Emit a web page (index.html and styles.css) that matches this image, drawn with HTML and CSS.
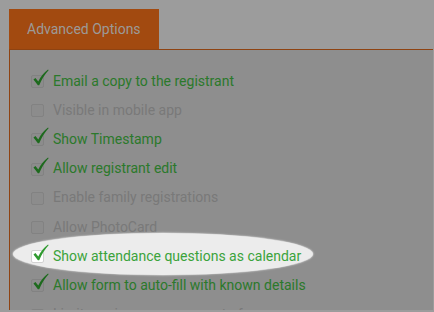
FILE: index.html
```html
<!DOCTYPE html>
<html>
<head>
<meta charset="utf-8">
<link rel="stylesheet" href="styles.css">
</head>
<body>
<div class="tabs"><div class="tab">Advanced Options</div></div>
<div class="panel">
  <div class="row on"><span class="box"><svg class="tick" viewBox="0 0 17 18"><path d="M0.5 11 L2.6 9.6 L5.6 13.2 Q9.5 5.5 16 0.6 L16.6 1.3 Q11 7 6.6 17.2 L5.2 17.2 Z"/></svg></span><span class="label">Email a copy to the registrant</span></div>
  <div class="row off"><span class="box"></span><span class="label">Visible in mobile app</span></div>
  <div class="row on"><span class="box"><svg class="tick" viewBox="0 0 17 18"><path d="M0.5 11 L2.6 9.6 L5.6 13.2 Q9.5 5.5 16 0.6 L16.6 1.3 Q11 7 6.6 17.2 L5.2 17.2 Z"/></svg></span><span class="label">Show Timestamp</span></div>
  <div class="row on"><span class="box"><svg class="tick" viewBox="0 0 17 18"><path d="M0.5 11 L2.6 9.6 L5.6 13.2 Q9.5 5.5 16 0.6 L16.6 1.3 Q11 7 6.6 17.2 L5.2 17.2 Z"/></svg></span><span class="label">Allow registrant edit</span></div>
  <div class="row off"><span class="box"></span><span class="label">Enable family registrations</span></div>
  <div class="row off"><span class="box"></span><span class="label">Allow PhotoCard</span></div>
  <div class="row on spot"><span class="box"><svg class="tick" viewBox="0 0 17 18"><path d="M0.5 11 L2.6 9.6 L5.6 13.2 Q9.5 5.5 16 0.6 L16.6 1.3 Q11 7 6.6 17.2 L5.2 17.2 Z"/></svg></span><span class="label">Show attendance questions as calendar</span></div>
  <div class="row on"><span class="box"><svg class="tick" viewBox="0 0 17 18"><path d="M0.5 11 L2.6 9.6 L5.6 13.2 Q9.5 5.5 16 0.6 L16.6 1.3 Q11 7 6.6 17.2 L5.2 17.2 Z"/></svg></span><span class="label">Allow form to auto-fill with known details</span></div>
  <div class="row off"><span class="box"></span><span class="label">Limit maximum responses to form</span></div>
</div>
</body>
</html>
```
FILE: styles.css
```css
html, body {
  margin: 0;
  padding: 0;
  background: #9c9c9c;
  font-family: Roboto, "Liberation Sans", sans-serif;
  font-size: 14px;
}
body {
  padding: 9px 1px 0 9px;
  height: 312px;
  box-sizing: border-box;
  overflow: hidden;
}
.tabs {
  display: flex;
  height: 40px;
}
.tab {
  background: #a24a10;
  color: #9c9a98;
  width: 150px;
  box-sizing: border-box;
  padding-left: 18px;
  line-height: 40px;
}
.panel {
  background: #8e8e8e;
  border-top: 1px solid #8e4312;
  border-left: 1px solid #8e4312;
  height: 261px;
  box-sizing: border-box;
  padding-top: 16px;
  overflow: hidden;
  display: flex;
  flex-direction: column;
}
.row {
  position: relative;
  z-index: 0;
  display: flex;
  align-items: center;
  gap: 9px;
  height: 29.2px;
  flex: none;
  padding-left: 21px;
  white-space: nowrap;
}
.box {
  position: relative;
  width: 11px;
  height: 11px;
  border: 1px solid #828282;
  border-radius: 2px;
  background: #8c8c8c;
  flex: none;
  margin-top: 2px;
}
.tick {
  position: absolute;
  left: 1px;
  top: -7px;
  width: 16px;
  height: 17px;
  fill: #1d6a1d;
}
.on .label { color: #2b792b; }
.off .label { color: #797979; }
.spot::before {
  content: "";
  position: absolute;
  z-index: -1;
  left: 3px;
  top: -8px;
  width: 300px;
  height: 42px;
  border-radius: 50%;
  background: #ececec;
  box-shadow: 0 0 1.5px 0.5px #d8d8d8;
}
.spot .box {
  background: #ffffff;
  border-color: #d2d2d2;
}
.spot .tick { fill: #2f9a2f; }
.spot .label { color: #3ba33b; }
```
